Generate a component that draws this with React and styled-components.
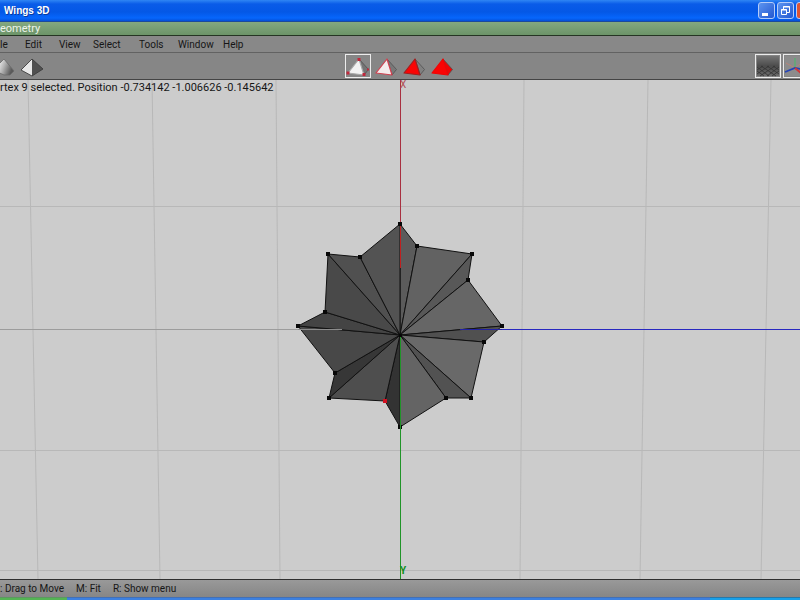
import React from 'react';
import styled, { createGlobalStyle } from 'styled-components';

const GlobalStyle = createGlobalStyle`
  * {
    box-sizing: border-box;
  }

  body {
    margin: 0;
    overflow: hidden;
    background: #cccccc;
    font-family: Roboto, "Liberation Sans", Arial, sans-serif;
    font-size: 11px;
    line-height: 14px;
    color: #161616;
  }

  button {
    font: inherit;
    color: inherit;
    border: 0;
    padding: 0;
    background: none;
  }
`;

const Window = styled.div`
  display: flex;
  flex-direction: column;
  width: 100%;
  height: 100vh;
  overflow: hidden;
  white-space: nowrap;
`;

const TitleBar = styled.header`
  flex: none;
  display: flex;
  align-items: center;
  justify-content: space-between;
  height: 22px;
  padding-left: 4px;
  overflow: hidden;
  border-bottom: 1px solid #1c4a9c;
  background: linear-gradient(#2f86f4 0, #0a5ce8 4px, #0458e6 12px, #0666fc 18px, #0450d8 100%);

  h1 {
    margin: 0;
    font-family: "Liberation Sans", Arial, sans-serif;
    font-size: 10px;
    font-weight: bold;
    color: #ffffff;
    text-shadow: 1px 1px #0a3a9c;
  }
`;

const WindowButtons = styled.div`
  display: flex;
  gap: 2px;
  margin-right: -13px;
`;

const WindowButton = styled.button`
  width: 17px;
  height: 17px;
  border: 1px solid #b4ccf8;
  border-radius: 3px;
  background: ${(props) => (props.$close ? '#dc5434' : 'linear-gradient(135deg, #5c94f0, #2458d0)')};

  svg {
    display: block;
  }
`;

const SceneTitle = styled.div`
  flex: none;
  height: 14px;
  border-bottom: 1px solid #253523;
  background: linear-gradient(#84a880, #6c9468);
  color: #eef4ec;
`;

const MenuBar = styled.nav`
  flex: none;
  display: flex;
  align-items: flex-end;
  gap: 10px;
  height: 17px;
  font-size: 10px;
  border-bottom: 1px solid #626262;
  background: #888888;
`;

const MenuItem = styled.button`
  width: ${(props) => props.$width}px;
  text-align: left;
`;

const Toolbar = styled.div`
  flex: none;
  display: grid;
  grid-template-columns: 1fr auto 1fr;
  align-items: center;
  height: 27px;
  overflow: hidden;
  border-bottom: 1px solid #444444;
  background: #868686;
`;

const ToolGroup = styled.div`
  display: flex;
  gap: 2px;
  justify-content: ${(props) => props.$align || 'center'};
  margin: ${(props) => props.$bleed || '0'};
`;

const ToolButton = styled.button`
  flex: none;
  width: 26px;
  height: 24px;
  border: 1px solid ${(props) => (props.$active ? '#ececec' : 'transparent')};

  svg {
    display: block;
  }
`;

const Viewport = styled.main`
  position: relative;
  flex: 1;
  min-height: 0;
  background: #cccccc;
`;

const Scene = styled.svg`
  display: block;
  width: 100%;
  height: 100%;

  text {
    font-size: 10px;
  }
`;

const Info = styled.p`
  position: absolute;
  top: 1px;
  left: 0;
  margin: 0;
`;

const StatusBar = styled.footer`
  flex: none;
  display: flex;
  align-items: center;
  gap: 12px;
  height: 18px;
  font-size: 10px;
  border-top: 1px solid #303030;
  background: linear-gradient(#999999, #868686);
`;

const TaskBar = styled.div`
  flex: none;
  display: grid;
  grid-template-columns: 67px 1fr 90px;
  height: 3px;
`;

const TaskArea = styled.div`
  border-top: 1px solid ${(props) => props.$edge};
  background: ${(props) => props.$color};
`;

const menus = [
  { label: 'le', width: 15 },
  { label: 'Edit', width: 24 },
  { label: 'View', width: 24 },
  { label: 'Select', width: 36 },
  { label: 'Tools', width: 29 },
  { label: 'Window', width: 35 },
  { label: 'Help', width: 26 },
];

const center = [400, 335];

const outline = [
  [400, 224], [417, 246], [472, 254], [468, 280],
  [502, 326], [484, 342], [471, 398], [446, 398],
  [400, 427], [385, 401], [329, 398], [335, 373],
  [298, 326], [325, 312], [328, 254], [360, 257],
];

const shades = [
  '#5b5b5b', '#626262', '#585858', '#666666',
  '#505050', '#696969', '#525252', '#646464',
  '#333333', '#4e4e4e', '#373737', '#484848',
  '#444444', '#494949', '#505050', '#535353',
];

const selectedVertex = 9;

// top x, bottom x
const gridColumns = [[28, 38], [152, 160], [276, 280], [524, 520], [648, 640], [771, 761]];
const gridRows = [206, 450, 570];

const Pyramid = ({ front, side, edge, dots }) => (
  <svg width="24" height="22" viewBox="0 0 24 22">
    <path d="M13 4 L18 20 L22.5 14.5 Z" fill={side} stroke="#505050" strokeWidth="0.8" />
    <path d="M13 4 L18 20 L2 18 Z" fill={front} stroke={edge} strokeWidth="1.2" strokeLinejoin="round" />
    {dots && (
      <g fill="#c0283c">
        <rect x="11.5" y="3" width="3" height="3" />
        <rect x="0.5" y="16.5" width="3" height="3" />
        <rect x="16.5" y="18" width="3" height="3" />
        <rect x="21" y="13.5" width="2" height="2" />
      </g>
    )}
  </svg>
);

const SmoothIcon = () => (
  <svg width="24" height="22" viewBox="0 0 24 22">
    <defs>
      <linearGradient id="smooth" y2="0.3">
        <stop offset="0.3" stopColor="#eeeeee" />
        <stop offset="0.6" stopColor="#b4b4b4" />
        <stop offset="1" stopColor="#5a5a5a" />
      </linearGradient>
    </defs>
    <path d="M12 4 L1 15 L12 20 L18 20 L22 16 Z" fill="url(#smooth)" stroke="#6a6a6a" strokeWidth="0.8" />
  </svg>
);

const FlatIcon = () => (
  <svg width="24" height="22" viewBox="0 0 24 22">
    <path d="M12 4 L1 15 L12 21 Z" fill="#e8e8e8" />
    <path d="M12 4 L12 21 L23 14 Z" fill="#505050" />
    <path d="M12 4 L1 15 L12 21 L23 14 Z" fill="none" stroke="#3c3c3c" strokeWidth="0.9" />
  </svg>
);

const GroundIcon = () => (
  <svg width="24" height="22" viewBox="0 0 24 22">
    <defs>
      <linearGradient id="ground" x2="0" y2="1">
        <stop offset="0" stopColor="#747474" />
        <stop offset="0.5" stopColor="#4c4c4c" />
        <stop offset="1" stopColor="#6c6c6c" />
      </linearGradient>
    </defs>
    <rect x="1" y="1" width="22" height="20" fill="url(#ground)" />
    <path
      d="M1 12 L13 21 M1 16 L8 21 M5 11 L20 21 M11 11 L23 19 M17 11 L23 15 M23 12 L11 21 M23 16 L16 21 M19 11 L4 21 M13 11 L1 19 M7 11 L1 15"
      fill="none"
      stroke="#343434"
      strokeWidth="0.8"
    />
  </svg>
);

const AxesIcon = () => (
  <svg width="24" height="22" viewBox="0 0 24 22">
    <rect x="1" y="1" width="22" height="20" fill="#8c8c8c" />
    <path d="M2 8 L11 13 L20 6" fill="none" stroke="#b88478" strokeWidth="1" />
    <path d="M11 13 V3" stroke="#5cac74" strokeWidth="1.5" />
    <path d="M1 17 L11 13 L23 15" fill="none" stroke="#2444b8" strokeWidth="1.8" />
    <path d="M11 13 L18 19" stroke="#d03838" strokeWidth="1.8" />
  </svg>
);

const Model = () => (
  <g>
    {outline.map((point, i) => {
      const next = outline[(i + 1) % outline.length];
      return (
        <polygon
          key={i}
          points={[center, point, next].join(' ')}
          fill={shades[i]}
          stroke="#111111"
          strokeWidth="1"
          strokeLinejoin="round"
        />
      );
    })}
    {outline.map(([x, y], i) => (
      <rect
        key={i}
        x={x - 2}
        y={y - 2}
        width="4"
        height="4"
        fill={i === selectedVertex ? '#d01020' : '#080808'}
      />
    ))}
    <rect x="399" y="334" width="3" height="3" fill="#080808" />
  </g>
);

const App = () => {
  return (
    <Window>
      <GlobalStyle />
      <TitleBar>
        <h1>Wings 3D</h1>
        <WindowButtons>
          <WindowButton aria-label="Minimize">
            <svg width="15" height="15"><rect x="3" y="10" width="6" height="3" fill="#ffffff" /></svg>
          </WindowButton>
          <WindowButton aria-label="Restore">
            <svg width="15" height="15" fill="none" stroke="#ffffff">
              <path d="M5.5 6 V3.5 H11.5 V9.5 H9 M5 4 H12" />
              <path d="M3.5 6.5 H8.5 V11.5 H3.5 Z M3 7 H9" />
            </svg>
          </WindowButton>
          <WindowButton $close aria-label="Close">
            <svg width="15" height="15" stroke="#ffffff" strokeWidth="2"><path d="M4 4 L11 11 M11 4 L4 11" /></svg>
          </WindowButton>
        </WindowButtons>
      </TitleBar>

      <SceneTitle>eometry</SceneTitle>

      <MenuBar>
        {menus.map((menu) => (
          <MenuItem key={menu.label} $width={menu.width}>{menu.label}</MenuItem>
        ))}
      </MenuBar>

      <Toolbar>
        <ToolGroup $align="flex-start" $bleed="0 0 0 -9px">
          <ToolButton aria-label="Smooth shading"><SmoothIcon /></ToolButton>
          <ToolButton aria-label="Flat shading"><FlatIcon /></ToolButton>
        </ToolGroup>
        <ToolGroup>
          <ToolButton $active aria-label="Vertex"><Pyramid front="#f2f2f2" side="#747474" edge="#a8a8a8" dots /></ToolButton>
          <ToolButton aria-label="Edge"><Pyramid front="#f4ecec" side="#787878" edge="#d04050" /></ToolButton>
          <ToolButton aria-label="Face"><Pyramid front="#fa0404" side="#808080" edge="#a02020" /></ToolButton>
          <ToolButton aria-label="Body"><Pyramid front="#fa0404" side="#f00404" edge="#f00404" /></ToolButton>
        </ToolGroup>
        <ToolGroup $align="flex-end" $bleed="0 -9px 0 0">
          <ToolButton $active aria-label="Ground plane"><GroundIcon /></ToolButton>
          <ToolButton $active aria-label="Axes"><AxesIcon /></ToolButton>
        </ToolGroup>
      </Toolbar>

      <Viewport>
        <Scene viewBox="0 80 800 499" preserveAspectRatio="xMidYMid slice">
          <g stroke="#b8b8b8" strokeWidth="1">
            {gridColumns.map(([top, bottom]) => (
              <line key={top} x1={top} y1="80" x2={bottom} y2="579" />
            ))}
            {gridRows.map((y) => (
              <line key={y} x1="0" y1={y + 0.5} x2="800" y2={y + 0.5} />
            ))}
          </g>
          <line x1="0" y1="329.5" x2="400" y2="329.5" stroke="#9c9c9c" />
          <line x1="400" y1="329.5" x2="800" y2="329.5" stroke="#2828c0" />
          <line x1="400.5" y1="80" x2="400.5" y2="240" stroke="#a83040" />
          <Model />
          <line x1="400.5" y1="226" x2="400.5" y2="268" stroke="#c02020" />
          <line x1="400.5" y1="337" x2="400.5" y2="579" stroke="#209428" />
          <line x1="298" y1="329.5" x2="342" y2="329.5" stroke="#8c8c8c" />
          <line x1="460" y1="329.5" x2="502" y2="329.5" stroke="#2020a0" />
          <text x="400" y="88" fill="#b04c54">X</text>
          <text x="400" y="574" fill="#108c18" fontWeight="bold">Y</text>
        </Scene>
        <Info>rtex 9 selected. Position -0.734142 -1.006626 -0.145642</Info>
      </Viewport>

      <StatusBar>
        <span>: Drag to Move</span>
        <span>M: Fit</span>
        <span>R: Show menu</span>
      </StatusBar>
      <TaskBar>
        <TaskArea $color="#54b454" $edge="#5c9860" />
        <TaskArea $color="#3c80e0" $edge="#4470b4" />
        <TaskArea $color="#18a0e8" $edge="#2878a8" />
      </TaskBar>
    </Window>
  );
};

export default App;
